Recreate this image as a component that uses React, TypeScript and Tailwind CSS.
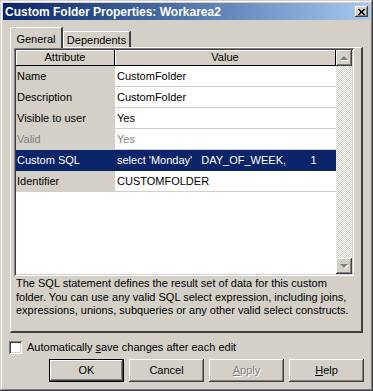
import React from 'react';

const raised =
  'shadow-[inset_-1px_-1px_#404040,inset_1px_1px_#ffffff,inset_-2px_-2px_#808080,inset_2px_2px_#d4d0c8]';
const sunken =
  'shadow-[inset_1px_1px_#808080,inset_-1px_-1px_#ffffff,inset_2px_2px_#404040,inset_-2px_-2px_#d4d0c8]';

const rows = [
  { attr: 'Name', value: 'CustomFolder' },
  { attr: 'Description', value: 'CustomFolder' },
  { attr: 'Visible to user', value: 'Yes' },
  { attr: 'Valid', value: 'Yes', disabled: true },
  { attr: 'Custom SQL', value: "select 'Monday'   DAY_OF_WEEK,        1", selected: true },
  { attr: 'Identifier', value: 'CUSTOMFOLDER' },
];

// small greyed scroll arrow
const Arrow: React.FC<{ up?: boolean }> = ({ up }) => (
  <svg width="9" height="6" viewBox="0 0 9 6">
    {up ? (
      <>
        <polygon points="4,1 8,5 0,5" fill="#ffffff" transform="translate(1,1)" />
        <polygon points="4,1 8,5 0,5" fill="#808080" />
      </>
    ) : (
      <>
        <polygon points="0,1 8,1 4,5" fill="#ffffff" transform="translate(1,1)" />
        <polygon points="0,1 8,1 4,5" fill="#808080" />
      </>
    )}
  </svg>
);

const Button: React.FC<{ children: React.ReactNode; isDefault?: boolean; disabled?: boolean }> = ({
  children,
  isDefault,
  disabled,
}) => (
  <div className={`w-[75px] h-[23px] ${isDefault ? 'border border-black' : ''}`}>
    <div
      className={`w-full h-full flex items-center justify-center bg-[#d4d0c8] ${raised} ${
        disabled ? 'text-[#808080] [text-shadow:1px_1px_0_#ffffff]' : 'text-black'
      }`}
    >
      {children}
    </div>
  </div>
);

export default function App() {
  return (
    <div className="w-[373px] h-[391px] bg-[#d4d0c8] p-[3px] flex flex-col text-[11px] text-black font-['Liberation_Sans',Arial,sans-serif] shadow-[inset_-1px_-1px_#404040,inset_1px_1px_#d4d0c8,inset_-2px_-2px_#808080,inset_2px_2px_#ffffff]">
      {/* Title bar */}
      <div className="h-[17px] flex items-center justify-between pl-[2px] pr-[2px] bg-linear-to-r from-[#0a246a] to-[#a6caf0]">
        <span className="text-white font-bold text-[12px] leading-none">Custom Folder Properties: Workarea2</span>
        <div className={`w-[13px] h-[11px] bg-[#d4d0c8] flex items-center justify-center ${raised}`}>
          <svg width="7" height="6" viewBox="0 0 7 6">
            <path d="M0 0 L6 6 M1 0 L7 6 M6 0 L0 6 M7 0 L1 6" stroke="#000" strokeWidth="1" />
          </svg>
        </div>
      </div>

      <div className="flex flex-col px-[7px] pt-[7px]">
        {/* Tabs */}
        <div className="flex items-end h-[20px]">
          <div className="relative z-10 w-[53px] h-[21px] -mb-px bg-[#d4d0c8] border-t border-l border-white border-r-2 border-r-[#404040] rounded-tl-[2px] flex items-start justify-center pt-[3px]">
            General
          </div>
          <div className="w-[68px] h-[16px] bg-[#d4d0c8] border-t border-l border-white border-r-2 border-r-[#404040] rounded-tl-[2px] flex items-start justify-center">
            Dependents
          </div>
        </div>

        {/* Tab panel */}
        <div className="h-[286px] border-t border-l border-white border-r-2 border-b-2 border-r-[#404040] border-b-[#404040] flex flex-col pl-[3px] pr-[5px]">
          {/* Grid */}
          <div className={`h-[228px] w-[340px] p-[2px] bg-white ${sunken} flex`}>
            <div className="w-[320px] flex flex-col">
              <div className="flex h-[16px] bg-[#d4d0c8] border-b border-black">
                <div className="w-[99px] flex items-center justify-center border-r border-black shadow-[inset_1px_1px_#ffffff]">
                  Attribute
                </div>
                <div className="flex-1 flex items-center justify-center border-r border-black shadow-[inset_1px_1px_#ffffff]">
                  Value
                </div>
              </div>
              {rows.map((r) => (
                <div
                  key={r.attr}
                  className={`flex h-[21px] ${r.selected ? 'bg-[#0a246a] text-white' : ''} ${
                    r.disabled ? 'text-[#808080]' : ''
                  }`}
                >
                  <div
                    className={`w-[99px] flex items-center pl-px ${r.selected ? '' : 'bg-[#d4d0c8]'} border-b ${
                      r.selected ? 'border-[#0a246a]' : 'border-[#d4d0c8]'
                    }`}
                  >
                    {r.attr}
                  </div>
                  <div
                    className={`flex-1 flex items-center pl-[2px] whitespace-pre border-b ${
                      r.selected ? 'border-[#0a246a]' : 'border-[#d4d0c8]'
                    }`}
                  >
                    {r.value}
                  </div>
                </div>
              ))}
            </div>
            {/* Scrollbar */}
            <div className="w-[16px] flex flex-col bg-[image:repeating-conic-gradient(#d4d0c8_0_25%,#ffffff_0_50%)] bg-[length:2px_2px]">
              <div className={`h-[16px] bg-[#d4d0c8] flex items-center justify-center ${raised}`}>
                <Arrow up />
              </div>
              <div className="flex-1" />
              <div className={`h-[16px] bg-[#d4d0c8] flex items-center justify-center ${raised}`}>
                <Arrow />
              </div>
            </div>
          </div>
          <p className="mt-px pl-[2px] leading-[13.5px]">
            The SQL statement defines the result set of data for this custom folder. You can use any valid SQL
            select expression, including joins, expressions, unions, subqueries or any other valid select
            constructs.
          </p>
        </div>

        {/* Auto save */}
        <div className="flex items-center gap-[5px] mt-[8px] -ml-px h-[13px]">
          <div className={`w-[13px] h-[13px] bg-white ${sunken}`} />
          <span>
            Automatically <span className="underline">s</span>ave changes after each edit
          </span>
        </div>
      </div>

      {/* Buttons */}
      <div className="flex justify-end gap-[5px] pr-[6px] mt-[5px]">
        <Button isDefault>OK</Button>
        <Button>Cancel</Button>
        <Button disabled>
          <span className="underline">A</span>pply
        </Button>
        <Button>
          <span className="underline">H</span>elp
        </Button>
      </div>
    </div>
  );
}
